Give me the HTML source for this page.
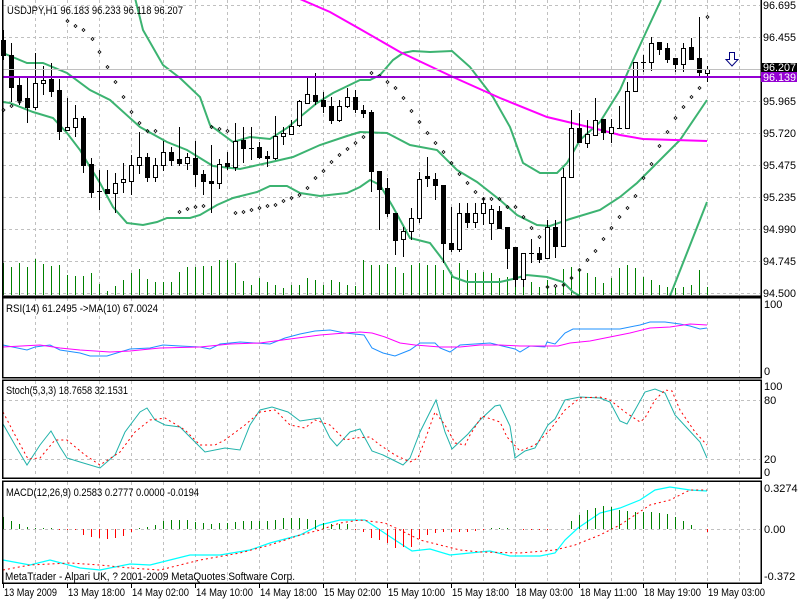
<!DOCTYPE html>
<html><head><meta charset="utf-8"><style>
html,body{margin:0;padding:0;background:#fff;width:800px;height:600px;overflow:hidden}
svg{display:block}
text{font-family:"Liberation Sans",sans-serif;font-size:11px;fill:#000}
</style></head><body>
<svg id="s" width="800" height="600" viewBox="0 0 800 600" xmlns="http://www.w3.org/2000/svg" shape-rendering="crispEdges">
<g id="grid" stroke="#c0c0c0" stroke-dasharray="3,3" stroke-width="1"></g>
<g id="vol" stroke="#008000" stroke-width="1"></g>
<g id="lines" fill="none" shape-rendering="auto"></g>
<g id="sar" fill="none" stroke="#000" stroke-width="0.8" shape-rendering="auto"></g>
<g id="candles" stroke="#000" stroke-width="1"></g>
<g id="hist" stroke-width="1"></g>
<line x1="2" y1="69.5" x2="761" y2="69.5" stroke="#c0c0c0"/>
<line x1="2" y1="77" x2="761" y2="77" stroke="#9400d3" stroke-width="2"/>
<path d="M729.5 52.5h5v7h3.5l-6 6.5-6-6.5h3.5z" fill="#fff" stroke="#000080" stroke-width="1" shape-rendering="auto"/>
<g fill="none" stroke="#000" stroke-width="1.5">
<rect x="2.5" y="-2" width="758.5" height="298"/>
<rect x="2.5" y="297.5" width="758.5" height="80"/>
<rect x="2.5" y="380" width="758.5" height="98"/>
<rect x="2.5" y="481" width="758.5" height="102"/>
</g>
<rect x="761" y="63" width="36" height="9" fill="#000"/>
<rect x="761" y="72" width="36" height="10" fill="#9400d3"/>
<g id="axis"></g>
<text x="7" y="14" textLength="176" lengthAdjust="spacingAndGlyphs">USDJPY,H1  96.183 96.233 96.118 96.207</text>
<text x="6" y="312" textLength="152" lengthAdjust="spacingAndGlyphs">RSI(14) 61.2495  -&gt;MA(10) 67.0024</text>
<text x="6" y="394" textLength="122" lengthAdjust="spacingAndGlyphs">Stoch(5,3,3) 18.7658 32.1531</text>
<text x="6" y="496" textLength="193" lengthAdjust="spacingAndGlyphs">MACD(12,26,9) 0.2583 0.2777 0.0000 -0.0194</text>
<text x="5" y="580" textLength="290" lengthAdjust="spacingAndGlyphs">MetaTrader - Alpari UK, ? 2001-2009 MetaQuotes Software Corp.</text>
</svg>
<script>
(function(){
var NS="http://www.w3.org/2000/svg";
function el(p,t,a,txt){var e=document.createElementNS(NS,t);for(var q in a)e.setAttribute(q,a[q]);if(txt!=null)e.textContent=txt;document.getElementById(p).appendChild(e);return e;}
for(var gx=35;gx<=739;gx+=32){[[0,295],[298,377],[381,477],[482,582]].forEach(function(r){el('grid','line',{x1:gx+.5,y1:r[0],x2:gx+.5,y2:r[1]});});}
for(var gy=5;gy<=293;gy+=32)el('grid','line',{x1:3,y1:gy+.5,x2:760,y2:gy+.5});
[400,459,529].forEach(function(yy){el('grid','line',{x1:3,y1:yy+.5,x2:760,y2:yy+.5});});
var C=[[40,30,60,55],[55,43,102,87],[85,78,105,100],[98,78,123,107],[107,53,110,83],[83,66,95,80],[79,63,97,91],[90,79,140,131],[130,98,131,127],[127,105,137,118],[118,116,173,165],[164,158,198,192],[191,170,210,191],[189,170,193,193],[193,173,213,183],[182,163,193,179],[181,155,195,165],[165,132,174,157],[157,153,182,177],[177,158,182,165],[165,141,171,152],[152,147,166,160],[159,127,166,163],[163,153,170,157],[158,141,187,174],[174,170,195,181],[181,145,213,183],[183,159,189,164],[163,152,170,166],[167,123,171,141],[140,127,163,148],[148,127,160,148],[147,142,159,157],[156,151,167,158],[158,116,160,136],[136,127,145,133],[134,120,134,126],[125,100,127,101],[103,78,103,94],[95,73,105,101],[100,92,113,106],[106,97,124,120],[120,100,122,106],[106,88,108,97],[97,90,113,109],[110,105,118,113],[112,110,192,171],[171,171,230,189],[188,178,217,213],[213,213,255,240],[239,227,257,231],[231,208,240,218],[218,172,223,179],[176,157,187,178],[179,173,200,185],[185,185,263,243],[243,207,252,249],[249,203,252,213],[213,203,228,222],[222,203,228,213],[213,197,225,203],[223,205,240,209],[211,206,228,228],[227,227,269,248],[247,247,287,279],[279,253,287,253],[253,239,263,253],[253,247,263,259],[258,220,258,227],[227,220,258,246],[246,168,246,177],[177,110,177,128],[128,113,142,142],[143,120,148,134],[135,98,135,120],[119,119,140,132],[133,119,143,127],[128,106,128,128],[128,82,128,91],[91,62,91,62],[62,55,72,62],[62,37,71,43],[42,42,55,49],[48,43,63,59],[58,58,72,64],[64,43,72,48],[47,38,59,59],[58,17,77,72],[73,66,82,69]];
var V=[263,267,263,267,259,264,266,265,275,276,276,273,284,291,286,280,273,269,279,282,282,282,272,267,267,266,266,260,260,263,281,285,278,282,285,288,285,285,278,280,285,280,282,285,286,260,265,265,264,267,273,265,263,265,265,270,272,263,270,273,272,273,278,277,277,280,282,287,280,287,269,267,269,273,277,283,278,268,265,268,277,280,285,287,288,287,285,270,287];
var H=[12,8,5,2,1,1,1,-1,-1,-1,-6,-8,-9,-10,-9,-7,-3,1,2,4,8,9,9,9,7,6,5,6,6,7,8,8,8,8,9,11,11,11,10,9,6,5,5,5,-1,-3,-9,-11,-14,-19,-18,-18,-10,-6,-4,-3,-3,-3,-3,-2,-1,1,1,1,0,-1,-1,-1,-1,0,0,8,14,19,21,23,22,19,18,17,17,17,16,15,12,8,4,0,-3];
for(var k=0;k<89;k++){var cx=3+8*k;
 el('vol','line',{x1:cx+.5,y1:V[k],x2:cx+.5,y2:295});
 var c=C[k],o=c[0],h=c[1],l=c[2],cl=c[3];
 el('candles','line',{x1:cx+.5,y1:h,x2:cx+.5,y2:l});
 var bt=Math.min(o,cl),bh=Math.abs(o-cl);
 if(bh<1){el('candles','line',{x1:cx-2,y1:bt+.5,x2:cx+3,y2:bt+.5});}
 else el('candles','rect',{x:cx-2+.5,y:bt+.5,width:4,height:bh,fill:(cl>o?'#000':'#fff')});
 var hv=H[k];if(hv!=0)el('hist','line',{x1:cx+.5,y1:529,x2:cx+.5,y2:529-hv,stroke:hv>0?'#008000':'#ff0000'});
}
function pl(pts,col,w,dash){var a={points:pts.map(function(p){return p.join(',')}).join(' '),stroke:col,'stroke-width':w||1};if(dash)a['stroke-dasharray']=dash;el('lines','polyline',a);}
var G='#3cb371';
pl([[135,-2],[143,30],[163,65],[180,78],[200,97],[210,125],[233,142],[250,137],[270,139],[287,128],[300,117],[317,103],[333,93],[360,80],[370,80],[380,75],[393,60],[403,53],[413,51],[430,52],[452,51],[470,67],[493,97],[510,127],[523,163],[540,173],[557,173],[567,163],[580,140],[600,122],[620,90],[630,67],[647,30],[661,0]],G,2);
pl([[3,53],[27,63],[43,63],[67,73],[90,90],[110,100],[140,127],[167,142],[187,150],[213,166],[240,169],[267,163],[293,157],[320,145],[347,136],[360,132],[387,133],[410,145],[437,150],[457,170],[477,182],[500,200],[517,215],[537,225],[550,226],[570,219],[600,210],[620,197],[637,183],[660,160],[680,140],[707,100]],G,2);
pl([[3,102],[10,103],[33,112],[53,118],[67,133],[80,150],[90,167],[100,183],[113,207],[127,223],[143,225],[157,222],[167,218],[190,218],[200,215],[217,205],[233,198],[257,192],[270,186],[287,186],[300,193],[320,196],[347,193],[360,187],[370,180],[380,185],[393,207],[410,238],[430,243],[443,260],[453,277],[467,282],[500,282],[513,279],[527,275],[547,277],[563,282],[573,292],[580,296]],G,2);
pl([[670,296],[707,202]],G,2);
pl([[300,-1],[330,12],[360,29],[400,52],[453,77],[500,98],[547,117],[593,128],[620,135],[643,139],[707,141]],'#ff00ff',2);
pl([[3,345],[27,350],[35,347],[50,345],[60,350],[80,353],[90,356],[107,356],[120,352],[130,349],[150,348],[163,345],[180,346],[200,347],[210,349],[220,344],[240,342],[270,344],[285,338],[300,334],[315,331],[330,330],[345,333],[364,335],[372,348],[383,353],[395,356],[410,350],[420,343],[435,343],[440,348],[450,352],[460,345],[490,343],[515,349],[520,352],[530,346],[545,347],[547,342],[555,344],[565,333],[573,329],[620,329],[640,325],[650,322],[665,322],[680,324],[690,326],[700,329],[707,328]],'#1e90ff',1);
pl([[3,347],[40,345],[60,348],[80,350],[110,352],[130,351],[160,348],[200,347],[230,344],[260,343],[290,339],[320,335],[345,333],[360,332],[372,333],[385,337],[400,343],[415,345],[440,347],[460,347],[480,345],[500,345],[520,346],[558,346],[570,343],[590,341],[610,337],[630,333],[650,328],[670,327],[690,324],[707,325]],'#ff00ff',1);
pl([[3,424],[15,445],[27,465],[40,445],[51,431],[60,447],[67,458],[80,462],[100,468],[115,455],[125,432],[140,412],[147,408],[155,420],[165,425],[180,427],[195,442],[205,452],[225,448],[240,450],[250,425],[260,410],[272,407],[288,412],[300,421],[320,418],[330,438],[337,446],[350,432],[360,429],[372,451],[383,455],[403,465],[410,458],[420,432],[432,408],[436,400],[445,432],[452,449],[468,434],[480,420],[495,406],[500,405],[510,426],[515,458],[525,451],[535,448],[548,425],[555,419],[565,400],[580,397],[600,398],[610,402],[620,421],[627,424],[635,410],[645,392],[655,389],[665,393],[675,415],[687,428],[700,442],[707,458]],'#20b2aa',1);
pl([[3,412],[15,435],[28,459],[40,458],[55,440],[67,440],[85,455],[100,465],[120,452],[135,432],[150,420],[165,418],[185,430],[200,445],[215,445],[225,440],[245,425],[260,412],[275,410],[290,425],[305,428],[315,420],[330,425],[345,440],[355,438],[370,437],[380,445],[395,455],[410,462],[418,458],[425,440],[435,412],[445,425],[455,443],[465,445],[470,435],[482,416],[500,422],[507,437],[520,451],[535,445],[550,430],[565,410],[580,398],[600,397],[610,400],[625,412],[640,422],[645,418],[655,400],[665,390],[672,391],[680,410],[695,432],[707,445]],'#ff0000',1,'2,3');
pl([[3,560],[30,565],[50,560],[80,568],[100,570],[130,564],[150,565],[170,560],[190,555],[220,555],[250,550],[270,543],[300,535],[320,525],[340,520],[365,520],[380,530],[395,540],[412,551],[430,549],[450,555],[470,553],[490,551],[510,556],[540,556],[555,553],[565,540],[578,528],[600,513],[620,508],[640,500],[655,490],[670,487],[690,490],[707,491]],'#00ffff',1.2);
pl([[3,570],[30,565],[70,563],[100,565],[130,568],[160,570],[200,560],[240,553],[270,545],[300,535],[320,530],[340,523],[360,520],[385,523],[400,530],[420,540],[440,545],[460,550],[480,552],[520,553],[555,550],[575,545],[600,535],[620,525],[635,515],[650,505],[670,500],[690,490],[707,490]],'#ff0000',1,'2,3');
var S=[[3,110],[11,106],[19,102],[67,21],[75,26],[83,30],[92,39],[99,52],[107,67],[115,82],[123,97],[131,112],[139,123],[147,131],[155,131],[179,212],[187,209],[195,207],[203,206],[211,127],[219,129],[227,131],[235,213],[243,212],[251,210],[259,208],[267,206],[275,205],[283,201],[291,198],[299,195],[307,188],[315,178],[323,171],[331,162],[339,155],[347,149],[355,143],[363,137],[371,73],[379,76],[387,82],[395,88],[403,98],[411,111],[419,122],[427,133],[435,143],[443,152],[451,163],[459,174],[467,183],[475,192],[483,199],[491,199],[499,199],[507,207],[515,207],[523,217],[531,228],[539,237],[547,287],[555,286],[563,285],[571,278],[579,270],[587,260],[595,251],[603,239],[611,228],[619,217],[627,208],[635,196],[643,178],[651,164],[659,146],[667,132],[675,118],[683,107],[691,97],[699,88],[707,17]];
S.forEach(function(p){el('sar','path',{d:'M'+(p[0]+.5)+' '+(p[1]-1.5)+'l1.5 1.5-1.5 1.5-1.5-1.5z'});});
var P=[['96.695',9],['96.455',41],['95.965',105],['95.720',137],['95.475',169],['95.235',201],['94.990',233],['94.745',265],['94.500',297]];
P.forEach(function(p){el('axis','text',{x:763,y:p[1],textLength:33,lengthAdjust:'spacingAndGlyphs'},p[0]);});
el('axis','text',{x:763,y:71,style:'fill:#fff',textLength:33,lengthAdjust:'spacingAndGlyphs'},'96.207');
el('axis','text',{x:763,y:81,style:'fill:#fff',textLength:33,lengthAdjust:'spacingAndGlyphs'},'96.139');
[['100',308],['0',375],['100',390],['80',404],['20',463],['0',476],['0.3274',492],['0.00',533],['-0.372',580]].forEach(function(p){el('axis','text',{x:764,y:p[1]},p[0]);});
var T=['13 May 2009','13 May 18:00','14 May 02:00','14 May 10:00','14 May 18:00','15 May 02:00','15 May 10:00','15 May 18:00','18 May 03:00','18 May 11:00','18 May 19:00','19 May 03:00'];
T.forEach(function(t,i){var tx=i==0?3:3+64*i;el('axis','text',{x:tx+1,y:596,textLength:(i==0?53:57),lengthAdjust:'spacingAndGlyphs'},t);el('axis','line',{x1:tx+.5,y1:583,x2:tx+.5,y2:588,stroke:'#000'});});
})();
</script>
</body></html>
